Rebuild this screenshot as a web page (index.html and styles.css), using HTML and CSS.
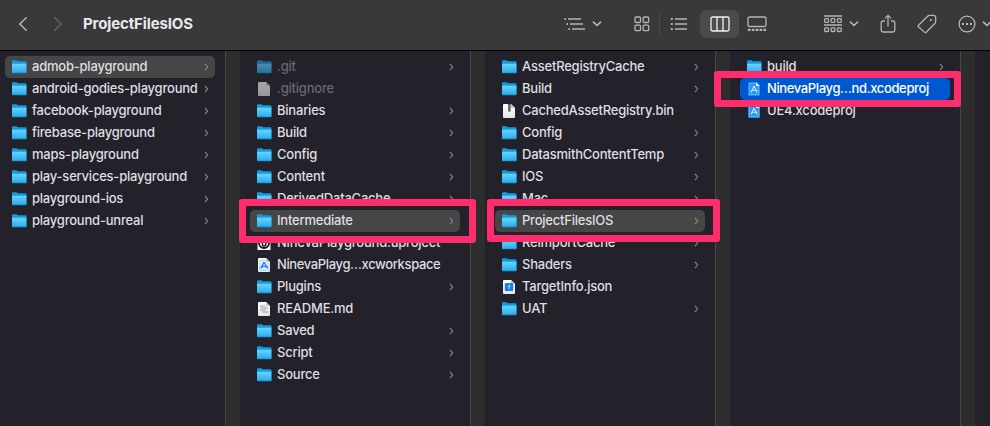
FILE: index.html
```html
<!DOCTYPE html>
<html lang="en">
<head>
<meta charset="utf-8">
<title>ProjectFilesIOS</title>
<link rel="stylesheet" href="styles.css">
</head>
<body>
<svg class="defs" aria-hidden="true">
  <defs>
    <linearGradient id="front" x1="0" y1="0" x2="0" y2="1"><stop offset="0" stop-color="#69d3ff"/><stop offset=".8" stop-color="#32b4ef"/><stop offset="1" stop-color="#1593d8"/></linearGradient>
    <linearGradient id="paper" x1="0" y1="0" x2="0" y2="1"><stop offset="0" stop-color="#fff"/><stop offset="1" stop-color="#e6e6e6"/></linearGradient>
    <symbol id="folder" viewBox="0 0 15 14"><path d="M0 1.2Q0 .2 1 .2H4.6L6 1.2H13.6Q14.4 1.2 14.4 2V13H0Z" fill="#149bdc"/><path d="M0 3.6H14.4V12.6Q14.4 13.3 13.7 13.3H.7Q0 13.3 0 12.6Z" fill="url(#front)"/><path d="M0 3.4H14.4" stroke="#1da5e5" stroke-width=".7"/></symbol>
    <symbol id="page" viewBox="0 0 15 14"><path d="M1 1Q1 0 2 0H9L13 4V13Q13 14 12 14H2Q1 14 1 13Z" fill="url(#paper)"/><path d="M9 0V3.2Q9 4 9.8 4H13Z" fill="#c6c6c6"/></symbol>
    <symbol id="bin" viewBox="0 0 15 14"><use href="#page"/><path d="M6 0H8.7V7.5H6Z" fill="#505050"/><path d="M6 2H8.7M6 4H8.7M6 6H8.7" stroke="#aaa" stroke-width=".7"/></symbol>
    <symbol id="workspace" viewBox="0 0 15 14"><use href="#page"/><path d="M2.7 2H8.5L11.7 5V12H2.7Z" fill="#e4f2ff" stroke="#8dc4f8" stroke-width=".6"/><path d="M7 4 4 10.5M7 4 10.5 10.5M3.8 8.4H10.8" stroke="#2588f5" stroke-width="1.5" fill="none"/></symbol>
    <symbol id="xcode" viewBox="0 0 15 14"><path d="M1 1Q1 0 2 0H9L13 4V13Q13 14 12 14H2Q1 14 1 13Z" fill="#1684e8"/><path d="M2.4 1.4H8.8L11.7 4.3V12.6H2.4Z" fill="#2795ee" stroke="#7fc6ff" stroke-width=".7"/><path d="M9 0V4H13Z" fill="#dff1ff"/><path d="M7 4 4.2 10.5M7 4 10.2 10.5M4.2 8.3H10.2" stroke="#c5e8ff" stroke-width="1.1" fill="none"/></symbol>
    <symbol id="readme" viewBox="0 0 15 14"><use href="#page"/><path d="M3 4H6" stroke="#c77a9a"/><path d="M6 4H8.5M3.5 6H11M3 8H9M5 10H11.5" stroke="#96a0ab" stroke-width="1"/></symbol>
    <symbol id="json" viewBox="0 0 15 14"><use href="#page"/><rect x="2.8" y="3" width="8.4" height="8" rx="1.3" fill="#1680ef"/><path d="M7.9 4.5Q7 4.5 7 5.5V9.5M5.8 6.4H8.6" stroke="#a9d6ff" stroke-width=".9" fill="none"/></symbol>
    <symbol id="unreal" viewBox="0 0 15 14"><rect x=".5" width="13" height="14" fill="#f4f4f4"/><circle cx="7" cy="7" r="5" fill="#fff" stroke="#171717" stroke-width="1.8"/><path d="M5.4 4V9Q7 11 8.8 9V4" fill="none" stroke="#171717" stroke-width="1.5"/></symbol>
    <symbol id="arrow" viewBox="0 0 5 8"><path d="M1 .8 3.6 4 1 7.2" fill="none" stroke="currentColor" stroke-width="1.1"/></symbol>
    <symbol id="down" viewBox="0 0 10 6"><path d="M1.5 1.2 5 4.5 8.5 1.2" fill="none" stroke="currentColor" stroke-width="1.7" stroke-linecap="round" stroke-linejoin="round"/></symbol>
  </defs>
</svg>
<div class="window">
  <header class="toolbar">
    <svg class="back" viewBox="0 0 10 16"><path d="M8.2 1.8 1.8 8 8.2 14.2"/></svg>
    <svg class="forward" viewBox="0 0 10 16"><path d="M1.8 1.8 8.2 8 1.8 14.2"/></svg>
    <h1 class="title">ProjectFilesIOS</h1>
    <div class="tools">
      <svg class="outline" viewBox="0 0 22 14"><path d="M4 2H17M6 7H19M8 12H21" stroke-width="1.5"/><path d="M.5 2H2M2.5 7H4M4.5 12H6" stroke-width="2"/></svg>
      <svg class="down d1"><use href="#down"/></svg>
      <svg class="grid" viewBox="0 0 16 16"><rect x="1" y="1" width="5.5" height="5.5" rx="1"/><rect x="9.2" y="1" width="5.5" height="5.5" rx="1"/><rect x="1" y="9.2" width="5.5" height="5.5" rx="1"/><rect x="9.2" y="9.2" width="5.5" height="5.5" rx="1"/></svg>
      <span class="rule"></span>
      <svg class="list" viewBox="0 0 18 14"><path d="M5 2H17M5 7H17M5 12H17" stroke-width="1.5"/><path d="M.8 2H2.8M.8 7H2.8M.8 12H2.8" stroke-width="2"/></svg>
      <span class="active"><svg class="cols" viewBox="0 0 20 16"><rect x="1" y="1" width="18" height="14" rx="1.5"/><path d="M7 1V15M13 1V15"/></svg></span>
      <svg class="gallery" viewBox="0 0 20 16"><rect x="1" y="1" width="18" height="9.5" rx="1.5"/><path d="M.8 13.8H19.2" stroke-width="2.2" stroke-dasharray="2.7 1.2"/></svg>
      <svg class="group" viewBox="0 0 18 18"><path d="M0 1H18M0 10H18"/><rect x=".7" y="3.7" width="3.8" height="3.7" rx=".8"/><rect x="7.1" y="3.7" width="3.8" height="3.7" rx=".8"/><rect x="13.5" y="3.7" width="3.8" height="3.7" rx=".8"/><rect x=".7" y="12.8" width="3.8" height="3.7" rx=".8"/><rect x="7.1" y="12.8" width="3.8" height="3.7" rx=".8"/><rect x="13.5" y="12.8" width="3.8" height="3.7" rx=".8"/></svg>
      <svg class="down d2"><use href="#down"/></svg>
      <svg class="share" viewBox="0 0 16 20"><path d="M5 7H3Q1.2 7 1.2 8.8V16.2Q1.2 18 3 18H13Q14.8 18 14.8 16.2V8.8Q14.8 7 13 7H11M8 12.5V1.5M5 4.4 8 1.4 11 4.4"/></svg>
      <svg class="tag" viewBox="0 0 20 20"><path d="M1.5 11.3 10.3 2.5Q11.3 1.3 12.8 1.3H16.5Q18.7 1.3 18.7 3.5V7.2Q18.7 8.7 17.6 9.8L9.2 18.2Q8.3 19 7.4 18.1L1.5 12.8Q.8 12 1.5 11.3Z"/><circle class="dot" cx="13.8" cy="6" r="1.1"/></svg>
      <svg class="more" viewBox="0 0 18 18"><circle cx="9" cy="9" r="7.9"/><path d="M4 9H6M8 9H10M12 9H14" stroke-width="2"/></svg>
      <svg class="down d3"><use href="#down"/></svg>
    </div>
  </header>
  <main class="browser">
    <ul class="column first">
      <li class="row selected"><svg class="icon"><use href="#folder"/></svg><span class="name">admob-playground</span><svg class="arrow"><use href="#arrow"/></svg></li>
      <li class="row"><svg class="icon"><use href="#folder"/></svg><span class="name">android-godies-playground</span><svg class="arrow"><use href="#arrow"/></svg></li>
      <li class="row"><svg class="icon"><use href="#folder"/></svg><span class="name">facebook-playground</span><svg class="arrow"><use href="#arrow"/></svg></li>
      <li class="row"><svg class="icon"><use href="#folder"/></svg><span class="name">firebase-playground</span><svg class="arrow"><use href="#arrow"/></svg></li>
      <li class="row"><svg class="icon"><use href="#folder"/></svg><span class="name">maps-playground</span><svg class="arrow"><use href="#arrow"/></svg></li>
      <li class="row"><svg class="icon"><use href="#folder"/></svg><span class="name">play-services-playground</span><svg class="arrow"><use href="#arrow"/></svg></li>
      <li class="row"><svg class="icon"><use href="#folder"/></svg><span class="name">playground-ios</span><svg class="arrow"><use href="#arrow"/></svg></li>
      <li class="row"><svg class="icon"><use href="#folder"/></svg><span class="name">playground-unreal</span><svg class="arrow"><use href="#arrow"/></svg></li>
    </ul>
    <div class="track"></div>
    <ul class="column">
      <li class="row hidden"><svg class="icon"><use href="#folder"/></svg><span class="name">.git</span><svg class="arrow"><use href="#arrow"/></svg></li>
      <li class="row hidden"><svg class="icon"><use href="#page"/></svg><span class="name">.gitignore</span></li>
      <li class="row"><svg class="icon"><use href="#folder"/></svg><span class="name">Binaries</span><svg class="arrow"><use href="#arrow"/></svg></li>
      <li class="row"><svg class="icon"><use href="#folder"/></svg><span class="name">Build</span><svg class="arrow"><use href="#arrow"/></svg></li>
      <li class="row"><svg class="icon"><use href="#folder"/></svg><span class="name">Config</span><svg class="arrow"><use href="#arrow"/></svg></li>
      <li class="row"><svg class="icon"><use href="#folder"/></svg><span class="name">Content</span><svg class="arrow"><use href="#arrow"/></svg></li>
      <li class="row"><svg class="icon"><use href="#folder"/></svg><span class="name">DerivedDataCache</span><svg class="arrow"><use href="#arrow"/></svg></li>
      <li class="row selected"><svg class="icon"><use href="#folder"/></svg><span class="name">Intermediate</span><svg class="arrow"><use href="#arrow"/></svg><span class="frame frame-a"></span></li>
      <li class="row"><svg class="icon"><use href="#unreal"/></svg><span class="name">NinevaPlayground.uproject</span></li>
      <li class="row shortened"><svg class="icon"><use href="#workspace"/></svg><span class="name">NinevaPlayg…xcworkspace</span></li>
      <li class="row"><svg class="icon"><use href="#folder"/></svg><span class="name">Plugins</span><svg class="arrow"><use href="#arrow"/></svg></li>
      <li class="row"><svg class="icon"><use href="#readme"/></svg><span class="name">README.md</span></li>
      <li class="row"><svg class="icon"><use href="#folder"/></svg><span class="name">Saved</span><svg class="arrow"><use href="#arrow"/></svg></li>
      <li class="row"><svg class="icon"><use href="#folder"/></svg><span class="name">Script</span><svg class="arrow"><use href="#arrow"/></svg></li>
      <li class="row"><svg class="icon"><use href="#folder"/></svg><span class="name">Source</span><svg class="arrow"><use href="#arrow"/></svg></li>
    </ul>
    <div class="track"></div>
    <ul class="column">
      <li class="row"><svg class="icon"><use href="#folder"/></svg><span class="name">AssetRegistryCache</span><svg class="arrow"><use href="#arrow"/></svg></li>
      <li class="row"><svg class="icon"><use href="#folder"/></svg><span class="name">Build</span><svg class="arrow"><use href="#arrow"/></svg></li>
      <li class="row"><svg class="icon"><use href="#bin"/></svg><span class="name">CachedAssetRegistry.bin</span></li>
      <li class="row"><svg class="icon"><use href="#folder"/></svg><span class="name">Config</span><svg class="arrow"><use href="#arrow"/></svg></li>
      <li class="row"><svg class="icon"><use href="#folder"/></svg><span class="name">DatasmithContentTemp</span><svg class="arrow"><use href="#arrow"/></svg></li>
      <li class="row"><svg class="icon"><use href="#folder"/></svg><span class="name">IOS</span><svg class="arrow"><use href="#arrow"/></svg></li>
      <li class="row"><svg class="icon"><use href="#folder"/></svg><span class="name">Mac</span><svg class="arrow"><use href="#arrow"/></svg></li>
      <li class="row selected"><svg class="icon"><use href="#folder"/></svg><span class="name">ProjectFilesIOS</span><svg class="arrow"><use href="#arrow"/></svg><span class="frame frame-b"></span></li>
      <li class="row"><svg class="icon"><use href="#folder"/></svg><span class="name">ReimportCache</span><svg class="arrow"><use href="#arrow"/></svg></li>
      <li class="row"><svg class="icon"><use href="#folder"/></svg><span class="name">Shaders</span><svg class="arrow"><use href="#arrow"/></svg></li>
      <li class="row"><svg class="icon"><use href="#json"/></svg><span class="name">TargetInfo.json</span></li>
      <li class="row"><svg class="icon"><use href="#folder"/></svg><span class="name">UAT</span><svg class="arrow"><use href="#arrow"/></svg></li>
    </ul>
    <div class="track"></div>
    <ul class="column">
      <li class="row"><svg class="icon"><use href="#folder"/></svg><span class="name">build</span><svg class="arrow"><use href="#arrow"/></svg></li>
      <li class="row selected current shortened"><svg class="icon"><use href="#xcode"/></svg><span class="name">NinevaPlayg…nd.xcodeproj</span><span class="frame frame-c"></span></li>
      <li class="row"><svg class="icon"><use href="#xcode"/></svg><span class="name">UE4.xcodeproj</span></li>
    </ul>
    <div class="track"></div>
  </main>
</div>
</body>
</html>
```

FILE: styles.css
```css
* { box-sizing: border-box; }
body { margin: 0; background: #23212a; font-family: Inter, "Liberation Sans", sans-serif; }
.defs { display: block; width: 0; height: 0; }
.window { width: 990px; height: 426px; overflow: hidden; display: flex; flex-direction: column; }
svg { display: block; flex: none; }

.toolbar { flex: none; height: 51px; padding: 0 0 2px 18px; display: flex; align-items: center; background: #39393b; border-bottom: 1px solid #000; color: #b4b4b5; }
.toolbar svg { fill: none; stroke: currentColor; stroke-width: 1.3; }
.toolbar .back, .toolbar .forward { width: 10px; height: 16px; stroke-width: 1.6; stroke-linecap: round; stroke-linejoin: round; }
.toolbar .forward { margin-left: 25px; color: #636365; }
.title { flex: none; margin: 0 0 0 20px; width: 120px; font-size: 15px; line-height: 20px; font-weight: 700; letter-spacing: -.13px; color: #e9e9ea; white-space: nowrap; }
.tools { flex: none; display: flex; align-items: center; margin-left: 361px; }
.outline { width: 22px; height: 14px; }
.down { width: 10px; height: 6px; }
.d1 { margin-left: 6px; }
.grid { width: 16px; height: 16px; margin-left: 32px; }
.rule { width: 1px; height: 20px; margin-left: 9px; background: #4c4c4e; }
.list { width: 18px; height: 14px; margin-left: 10px; }
.active { width: 39px; height: 28px; margin-left: 12px; display: flex; align-items: center; justify-content: center; background: #4b4b4d; border-radius: 6px; color: #f2f2f2; }
.cols { width: 20px; height: 16px; }
.gallery { width: 20px; height: 16px; margin-left: 8px; }
.group { width: 18px; height: 18px; margin-left: 57px; }
.d2 { margin-left: 7px; }
.share { width: 16px; height: 20px; margin-left: 21px; }
.tag { width: 20px; height: 20px; margin-left: 21px; }
.tag .dot { fill: currentColor; stroke: none; }
.more { width: 18px; height: 18px; margin-left: 21px; }
.d3 { margin-left: 6px; }

.browser { flex: 1; display: flex; min-height: 0; }
.column { list-style: none; margin: 0; padding: 5px 10px 0; width: 230px; flex: none; }
.column.first { width: 225px; padding-left: 5px; }
.track { flex: none; width: 15px; background: #2d2d2d; border-left: 1px solid #47474a; }
.row { height: 22px; padding: 0 6px 0 7px; display: flex; align-items: center; position: relative; border-radius: 5px; }
.icon { width: 15px; height: 14px; }
.name { flex: 1; margin: 0 0 2px 5px; font-size: 13px; line-height: 20px; font-weight: 500; letter-spacing: -.22px; color: #dfdee0; white-space: nowrap; }
.shortened .name { letter-spacing: -.37px; }
.arrow { width: 5px; height: 8px; color: #89888d; }
.selected { background: #464646; z-index: 1; }
.current { background: #0058d0; }
.current .name { color: #fff; }
.hidden .icon { opacity: .6; }
.hidden .name { color: #68676c; }
.frame { position: absolute; border: 7px solid #ff2d6c; border-radius: 3px; }
.frame-a { left: -11px; top: -11px; width: 237px; height: 44px; }
.frame-b { left: -8px; top: -11px; width: 233px; height: 43px; }
.frame-c { left: -26px; top: -7px; width: 247px; height: 36px; }
```
